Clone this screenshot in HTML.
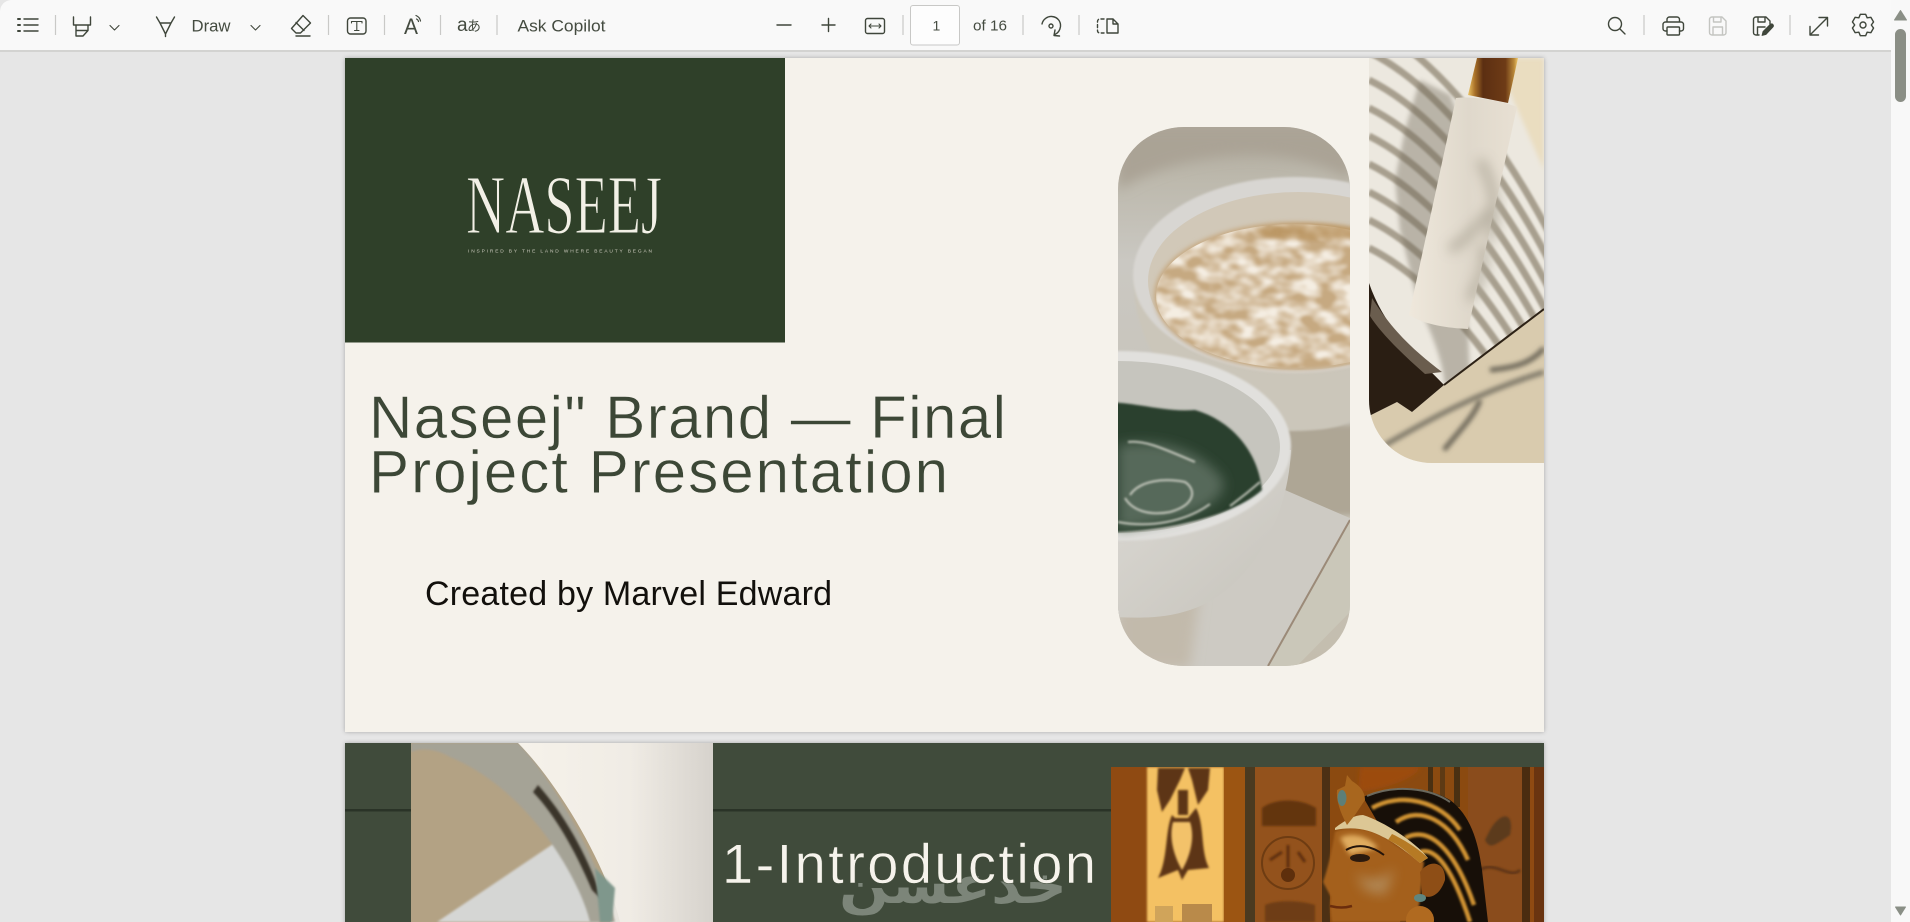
<!DOCTYPE html>
<html lang="en"><head><meta charset="utf-8"><title>Naseej PDF</title>
<style>html,body{margin:0;padding:0;width:1910px;height:922px;overflow:hidden;background:#e6e6e6}svg{display:block}text{font-family:"Liberation Sans","DejaVu Sans","Noto Sans CJK JP",sans-serif}</style></head><body>
<svg width="1910" height="922" viewBox="0 0 1910 922" xmlns="http://www.w3.org/2000/svg">
<defs>
<filter id="b1" x="-20%" y="-20%" width="140%" height="140%"><feGaussianBlur stdDeviation="1"/></filter>
<filter id="b2" x="-20%" y="-20%" width="140%" height="140%"><feGaussianBlur stdDeviation="2.5"/></filter>
<filter id="b3" x="-30%" y="-30%" width="160%" height="160%"><feGaussianBlur stdDeviation="6"/></filter>
<filter id="sh" x="-2%" y="-2%" width="104%" height="104%"><feDropShadow dx="0" dy="0" stdDeviation="2" flood-color="#000" flood-opacity=".28"/></filter>
<filter id="oats" x="0" y="0" width="100%" height="100%"><feTurbulence type="fractalNoise" baseFrequency=".05 .075" numOctaves="2" seed="7"/><feColorMatrix values="0 0 0 0 .91 0 0 0 0 .85 0 0 0 0 .76 2.600 0 0 0 -.85"/><feGaussianBlur stdDeviation="1"/><feComposite in2="SourceAlpha" operator="in"/></filter>
<linearGradient id="bg1" x1="0" y1="0" x2="0" y2="1"><stop offset="0" stop-color="#aea89b"/><stop offset=".1" stop-color="#bdb9ad"/><stop offset=".25" stop-color="#cac8c2"/><stop offset="1" stop-color="#c4bdae"/></linearGradient>
<linearGradient id="front" x1="0" y1="0" x2="1" y2="1"><stop offset="0" stop-color="#dddbd6"/><stop offset="1" stop-color="#c6c3bb"/></linearGradient>
<linearGradient id="tube" x1="0" y1="0" x2="1" y2="0"><stop offset="0" stop-color="#efe8dc"/><stop offset=".55" stop-color="#dfd8cb"/><stop offset="1" stop-color="#e8e0d3"/></linearGradient>
<linearGradient id="cap" x1="0" y1="0" x2="1" y2="0"><stop offset="0" stop-color="#edc565"/><stop offset=".14" stop-color="#a87028"/><stop offset=".3" stop-color="#5c2f12"/><stop offset=".75" stop-color="#6e3b16"/><stop offset=".92" stop-color="#b98838"/><stop offset="1" stop-color="#f0ca6c"/></linearGradient>
<linearGradient id="right2" x1="0" y1="0" x2="1" y2="0"><stop offset="0" stop-color="#f6f2ea"/><stop offset=".55" stop-color="#f0ece5"/><stop offset="1" stop-color="#d4d0ca"/></linearGradient>
<clipPath id="c1"><rect x="1118" y="127" width="232" height="539" rx="66" ry="62"/></clipPath>
<clipPath id="c2"><path d="M1369 58H1544V463H1432C1397 463 1369 435 1369 400Z"/></clipPath>
<clipPath id="c3"><rect x="411" y="743" width="302" height="179"/></clipPath>
<clipPath id="c4"><rect x="1111" y="767" width="433" height="155"/></clipPath>
</defs>

<rect width="1910" height="922" fill="#e6e6e6"/>

<!-- PAGE 1 -->
<g filter="url(#sh)"><rect x="345" y="58" width="1199" height="674" fill="#f5f2eb"/></g>
<rect x="345" y="58" width="440" height="284.500" fill="#2f4029"/>
<text transform="translate(466,233)" font-size="84" textLength="196" lengthAdjust="spacingAndGlyphs" fill="#f2f0e6" stroke="#2f4029" stroke-width="1.100" style="font-family:'Liberation Serif',serif">NASEEJ</text>
<text x="468" y="252.500" font-size="4.800" textLength="184" lengthAdjust="spacing" fill="#cfcdc0">INSPIRED BY THE LAND WHERE BEAUTY BEGAN</text>
<text x="369" y="438" font-size="60" textLength="637" lengthAdjust="spacing" fill="#3c4736" stroke="#f5f2eb" stroke-width=".5">Naseej" Brand — Final</text>
<text x="369" y="492.500" font-size="60" textLength="579" lengthAdjust="spacing" fill="#3c4736" stroke="#f5f2eb" stroke-width=".5">Project Presentation</text>
<text x="425" y="605" font-size="34" textLength="407" lengthAdjust="spacing" fill="#12100c">Created by Marvel Edward</text>

<!-- bowls image -->
<g clip-path="url(#c1)">
<rect x="1118" y="127" width="232" height="539" fill="url(#bg1)"/>
<path d="M1118 190C1180 150 1290 140 1350 180V127H1118Z" fill="#aaa395" filter="url(#b3)"/>
<rect x="1270" y="425" width="90" height="90" fill="#aea695" filter="url(#b2)"/>
<path d="M1134 290C1140 380 1220 431 1290 431C1320 431 1340 428 1352 420V270H1134Z" fill="#cbc6ba" filter="url(#b1)"/>
<ellipse cx="1295" cy="275" rx="162" ry="98" fill="#d8d6d2" filter="url(#b1)"/>
<ellipse cx="1298" cy="281" rx="150" ry="89" fill="#d1c8b8"/>
<ellipse cx="1295" cy="296" rx="141" ry="74" fill="#c6a981" filter="url(#b2)"/>
<ellipse cx="1295" cy="296" rx="139" ry="72" fill="#c6a981" filter="url(#oats)"/>
<ellipse cx="1310" cy="232" rx="55" ry="8" fill="#b58c52" filter="url(#b2)" opacity=".6"/>
<path d="M1118 600L1285 490L1352 519V560L1270 668H1118Z" fill="#cdcac3"/>
<path d="M1118 610L1200 590L1190 668H1118Z" fill="#c2baab" filter="url(#b3)"/>
<path d="M1352 518L1268 668H1295L1352 610Z" fill="#cac7b9"/>
<path d="M1350 520L1268 666" stroke="#9b8a78" stroke-width="2" fill="none"/>
<path d="M1100 450H1291C1288 520 1250 590 1190 610C1160 620 1130 618 1100 616Z" fill="url(#front)"/>
<ellipse cx="1120" cy="446" rx="171" ry="95" fill="#e1e0dd" filter="url(#b1)"/>
<ellipse cx="1118" cy="447" rx="162" ry="86" fill="#c6c5be"/>
<path d="M1110 402C1150 405 1165 412 1195 410C1230 420 1258 450 1262 490C1240 510 1190 528 1118 532H1100V402Z" fill="#2b402f" filter="url(#b1)"/>
<path d="M1118 445C1160 437 1200 450 1222 478C1230 495 1205 512 1170 520C1150 525 1130 528 1118 530Z" fill="#56695a" filter="url(#b3)"/>
<path d="M1128 442C1145 440 1162 448 1195 462M1130 495C1140 480 1165 478 1185 482C1197 490 1195 505 1170 512C1148 516 1132 510 1125 498M1118 522C1150 528 1185 522 1210 504M1260 482C1245 495 1238 500 1230 506" stroke="#dcdcd2" stroke-width="2" fill="none" filter="url(#b1)" opacity=".85"/>
</g>

<!-- tube image -->
<g clip-path="url(#c2)">
<rect x="1369" y="58" width="175" height="405" fill="#ece8df"/>
<path d="M1495 58H1544V170Z" fill="#eaddc0" filter="url(#b2)"/>
<g fill="none" stroke="#a79f8e" stroke-width="7" filter="url(#b1)">
<path d="M1369 24C1420 49 1490 114 1560 254"/><path d="M1369 52C1420 77 1490 142 1560 282"/><path d="M1369 80C1420 105 1490 170 1560 310"/><path d="M1369 108C1420 133 1490 198 1560 338"/><path d="M1369 136C1420 161 1490 226 1560 366"/><path d="M1369 164C1420 189 1490 254 1560 394"/><path d="M1369 192C1420 217 1490 282 1560 422"/><path d="M1369 220C1420 245 1490 310 1560 450"/><path d="M1369 248C1420 273 1490 338 1560 478"/>
</g>
<path d="M1420 80L1450 95L1460 120L1465 170L1465 260L1470 380L1445 385C1440 340 1420 320 1410 270L1400 230L1395 180L1405 130Z" fill="#6e6656" opacity=".4" filter="url(#b2)"/>
<path d="M1544 310L1444 385L1412 412L1397 402L1369 416V470H1544Z" fill="#d9cbae"/>
<path d="M1385 445C1420 425 1470 395 1544 372" stroke="#7d7768" stroke-width="5" fill="none" filter="url(#b2)"/>
<path d="M1444 450C1460 430 1475 415 1480 400M1490 370C1510 368 1530 365 1544 348" stroke="#6c6658" stroke-width="5" fill="none" filter="url(#b2)"/>
<path d="M1369 283C1385 330 1420 360 1444 385L1412 412L1397 402L1369 416Z" fill="#2a1e13"/>
<path d="M1372 298C1395 335 1420 355 1442 372L1425 374C1400 352 1380 332 1370 316Z" fill="#6a5d4e"/>
<path d="M1544 309L1444 385" stroke="#2d2216" stroke-width="2"/>
<path d="M1468 95L1477 58H1518L1508 103Z" fill="url(#cap)"/>
<path d="M1456 98C1470 96 1500 100 1517 107L1468 329C1448 328 1425 325 1409 315Z" fill="url(#tube)"/>
<path d="M1480 160C1490 180 1500 200 1490 240M1450 250C1465 240 1480 225 1490 210M1470 300C1480 280 1488 265 1482 245" stroke="#aca596" stroke-width="9" fill="none" filter="url(#b3)" opacity=".8"/>
</g>

<!-- PAGE 2 -->
<g filter="url(#sh)"><rect x="345" y="743" width="1199" height="200" fill="#414c3a"/></g>
<rect x="345" y="809" width="66" height="2.500" fill="#2a3327"/>
<rect x="713" y="809" width="400" height="2.500" fill="#2a3327"/>
<g clip-path="url(#c3)">
<rect x="411" y="743" width="302" height="179" fill="url(#right2)"/>
<path d="M411 743H610V922H411Z" fill="#b3a284"/>
<path d="M437 922L559 840L600 922Z" fill="#d5d6d4" filter="url(#b1)"/>
<path d="M411 743H518C550 775 600 860 615 922H590C580 880 530 790 450 757C435 748 420 748 411 752Z" fill="#a5a396" filter="url(#b1)"/>
<path d="M518 743C555 780 605 860 620 922H720V743Z" fill="url(#right2)"/>
<path d="M538 785C565 815 590 860 602 900L592 890C575 850 555 815 533 792Z" fill="#3a342a" filter="url(#b1)"/>
<path d="M595 868L615 888L612 922H600Z" fill="#7f978c" filter="url(#b1)"/>
</g>
<text x="1067" y="903" font-size="52" font-weight="bold" textLength="228" lengthAdjust="spacingAndGlyphs" fill="#7c8579" style="font-family:'DejaVu Sans',sans-serif" direction="rtl">خدعسن</text>
<text x="722" y="883" font-size="56" textLength="374" lengthAdjust="spacing" fill="#f6f3ec" stroke="#414c3a" stroke-width=".5">1-Introduction</text>

<!-- Egyptian image -->
<g clip-path="url(#c4)">
<rect x="1111" y="767" width="433" height="155" fill="#8f4a12"/>
<rect x="1147" y="767" width="77" height="155" fill="#f4c164" filter="url(#b1)"/>
<g fill="#5d3413" filter="url(#b1)">
<path d="M1158 768L1185 768L1180 780L1170 800L1162 812L1157 790Z"/><path d="M1188 768L1210 768L1208 790L1198 805L1192 780Z"/><rect x="1178" y="790" width="10" height="25"/>
<path d="M1172 815C1165 830 1168 860 1158 878L1178 870L1182 880L1188 870L1209 868C1200 850 1205 825 1196 808L1188 818H1175Z"/>
</g>
<path d="M1173 822H1190C1196 840 1188 860 1182 870C1176 860 1168 840 1173 822Z" fill="#f3c26a" filter="url(#b1)"/>
<rect x="1155" y="906" width="18" height="16" fill="#d0a45a"/><rect x="1182" y="904" width="30" height="18" fill="#b98a4a"/>
<rect x="1224" y="767" width="21" height="155" fill="#9c5512"/>
<rect x="1245" y="767" width="10" height="155" fill="#4a3a20"/>
<rect x="1255" y="767" width="67" height="155" fill="#93521c"/>
<path d="M1262 808C1275 798 1300 798 1316 808V826H1262Z" fill="#64350f" filter="url(#b1)"/>
<circle cx="1288" cy="863" r="26" fill="none" stroke="#6e3c12" stroke-width="2"/>
<circle cx="1288" cy="875" r="7" fill="#5e2f0c"/><path d="M1288 845V868M1270 860L1282 852M1298 852L1305 862" stroke="#5e2f0c" stroke-width="3" filter="url(#b1)"/>
<path d="M1265 905C1275 900 1300 900 1315 905V922H1265Z" fill="#6e3c12" filter="url(#b1)"/>
<rect x="1322" y="767" width="8" height="155" fill="#4c3014"/>
<rect x="1330" y="767" width="138" height="155" fill="#8b4a10"/>
<path d="M1360 767H1420C1415 780 1380 790 1358 792Z" fill="#9c4c0e" filter="url(#b2)"/>
<rect x="1428" y="767" width="5" height="30" fill="#4a3012"/><rect x="1440" y="767" width="5" height="30" fill="#5e3a14"/><rect x="1454" y="767" width="6" height="40" fill="#4a3012"/>
<rect x="1468" y="767" width="54" height="155" fill="#8a4c1c"/>
<path d="M1490 830C1500 812 1515 810 1510 835C1495 845 1490 850 1485 840Z" fill="#5c3a1e" filter="url(#b1)"/>
<path d="M1480 870C1495 860 1510 880 1520 870" stroke="#5e3614" stroke-width="3" fill="none" filter="url(#b1)"/>
<rect x="1522" y="767" width="8" height="155" fill="#4a2c10"/><rect x="1534" y="767" width="10" height="155" fill="#6a3410"/>
<path d="M1363 797C1395 782 1430 788 1450 800C1470 815 1478 840 1482 870L1488 922H1400L1420 860L1385 835Z" fill="#170f08"/>
<g fill="none" stroke="#cf9230" stroke-width="4.500" filter="url(#b1)">
<path d="M1372 808C1400 792 1440 800 1460 830"/>
<path d="M1396 822C1420 805 1450 820 1468 860"/>
<path d="M1405 838C1430 825 1455 850 1474 905"/>
<path d="M1420 852C1440 845 1458 885 1470 922"/>
</g>
<path d="M1367 796C1395 784 1430 788 1450 802" stroke="#8d8f82" stroke-width="2" fill="none" opacity=".7"/>
<path d="M1335 832C1345 826 1375 826 1395 845L1424 862L1420 900L1416 922H1332C1330 910 1330 905 1331 897L1323 882C1328 868 1332 850 1335 832Z" fill="#a4601c" filter="url(#b1)"/>
<path d="M1340 838C1350 832 1368 835 1378 848L1350 855Z" fill="#e0ac5e" filter="url(#b2)"/>
<path d="M1355 872C1370 885 1385 878 1395 868L1385 895L1365 890Z" fill="#b69468" filter="url(#b3)" opacity=".8"/>
<path d="M1346 850C1358 843 1372 846 1384 855" stroke="#24140a" stroke-width="2" fill="none"/>
<ellipse cx="1360" cy="858" rx="10" ry="4" fill="#2c1a0e"/>
<path d="M1330 906C1338 908 1345 908 1352 906" stroke="#6b2d0c" stroke-width="2.500" fill="none"/>
<path d="M1420 872C1430 858 1446 862 1445 880C1440 895 1430 900 1422 895Z" fill="#8e4e16"/>
<ellipse cx="1420" cy="898" rx="6" ry="4" fill="#5f8680"/>
<circle cx="1420" cy="920" r="14" fill="#b06a20"/>
<path d="M1335 828C1345 820 1355 815 1363 815C1385 822 1415 842 1428 858L1420 863C1405 850 1390 840 1383 837C1370 830 1355 826 1335 830Z" fill="#dcc795"/>
<path d="M1392 834C1405 840 1420 850 1428 858L1420 863C1410 855 1400 845 1388 840Z" fill="#b67a24"/>
<path d="M1345 786L1347 775L1352 781C1358 785 1365 790 1365 800L1355 815L1347 825C1340 812 1336 800 1337 790Z" fill="#a8661e"/>
<ellipse cx="1342" cy="798" rx="4.500" ry="8" fill="#5d7f78"/>
</g>

<!-- TOOLBAR -->
<path d="M0 51V12C0 5 5 0 12 0H1891V51Z" fill="#f9f9f9"/>
<rect x="0" y="50" width="1891" height="2" fill="#d3d3d1"/>
<g stroke="#c9c9c7" stroke-width="1.200"><path d="M55.500 15V35M328.500 15V35M384.500 15V35M440.500 15V35M497 15V35M903 15V35M1023 15V35M1079 15V35M1644 15V35M1790 15V35"/></g>

<g fill="none" stroke="#3f463b" stroke-width="1.400" stroke-linejoin="round" stroke-linecap="round">
<path d="M24 19H38M24 25H38M24 31H38"/>
<path d="M18 19H20M18 25H20M18 31H20" stroke-width="2"/>
<path d="M73.500 17V25H90.500V17M76 25V36H83L88 30.500V25M76 30.500H88"/>
<path d="M110 25.500L114.500 30L119 25.500M251 25.500L255.500 30L260 25.500" stroke-width="1.100"/>
<path d="M156.500 17L160 23H171L174.500 17M160 23L165.500 34L171 23M165.500 34V36.500"/>
<path d="M303 15.500L310.500 23L300.500 33H296L291.500 28.500ZM296 22.500L304 30.500M296 36H310"/>
<rect x="347.500" y="18" width="18.500" height="16" rx="3"/>
<path d="M351.500 21.500V23M351.500 21.500H362V23M356.800 21.500V30.500M354.500 30.500H359" stroke-width="1.100"/>
<path d="M416 15.500C418.500 16.500 420 18.500 420.500 21M416.500 19C417.700 19.500 418.300 20.500 418.500 21.500" stroke-width="1.200"/>
<path d="M777 25H791M822 25H835M828.500 18.500V31.500"/>
<rect x="865.500" y="18.500" width="19" height="15" rx="2"/>
<path d="M869 26H881M871 24L869 26L871 28M879 24L881 26L879 28" stroke-width="1.100"/>
<path d="M1042 24C1043 19 1048 16 1052 16.500C1058 17 1061 22 1060.500 26.500C1060 30 1058 33 1055 34.500M1055 30L1054 35.500L1059.500 36"/>
<circle cx="1051" cy="26" r="2"/>
<path d="M1104 19H1100C1098.500 19 1097.500 20 1097.500 21.500V30.500C1097.500 32 1098.500 33 1100 33H1104" stroke-dasharray="3 2.500"/>
<path d="M1107 19H1113L1118 24V33H1107ZM1113 19V24H1118"/>
<circle cx="1615" cy="24" r="6.500"/><path d="M1620 29L1625 34"/>
<path d="M1667 22V19.500C1667 18 1668 17 1669.500 17H1677C1678.500 17 1679.500 18 1679.500 19.500V22M1667 31H1665.500C1664 31 1663 30 1663 28.500V24.500C1663 23 1664 22 1665.500 22H1681C1682.500 22 1683.500 23 1683.500 24.500V28.500C1683.500 30 1682.500 31 1681 31H1679.500"/>
<rect x="1667" y="27" width="12.500" height="8" rx="1"/>
<g stroke="#c4c5c1"><path d="M1709.500 19.500C1709.500 18 1710.500 17 1712 17H1722L1726 21V32.500C1726 34 1725 35 1723.500 35H1712C1710.500 35 1709.500 34 1709.500 32.500ZM1713.500 17V22H1721V17M1713 35V27H1722.500V35"/></g>
<path d="M1753.500 19.500C1753.500 18 1754.500 17 1756 17H1766L1770 21V24M1758 17V22H1765V17M1753.500 19.500V32.500C1753.500 34 1754.500 35 1756 35H1759M1757.500 35V27H1765"/>
<path d="M1762 35.500L1763 31.500L1770 24.500C1771 23.500 1772.500 23.500 1773 24.500C1773.800 25.500 1773.500 26.500 1772.800 27.200L1766 34.500Z" fill="#3f463b" stroke-width=".8"/>
<path d="M1810 35L1827 18M1819 17.500H1827.500V26M1810 26.500V35H1818.500"/>
<g transform="translate(1863,25)"><path d="M2.660 -10.670L4.150 -7.190L7.910 -7.640L10.570 -3.030L8.300 0L10.570 3.030L7.910 7.640L4.150 7.190L2.660 10.670H-2.660L-4.150 7.190L-7.910 7.640L-10.570 3.030L-8.300 0L-10.570 -3.030L-7.910 -7.640L-4.150 -7.190L-2.660 -10.670Z"/><circle r="3"/></g>
</g>

<g fill="#444b40">
<text x="191.500" y="31.500" font-size="17" textLength="39" lengthAdjust="spacingAndGlyphs">Draw</text>
<text x="404" y="34" font-size="22" textLength="14" lengthAdjust="spacingAndGlyphs">A</text>
<text x="457" y="31" font-size="19">a</text>
<text x="467" y="31" font-size="14" style="font-family:'Noto Sans CJK JP',sans-serif">あ</text>
<text x="517.500" y="31.500" font-size="17" textLength="88" lengthAdjust="spacingAndGlyphs">Ask Copilot</text>
<text x="973" y="30.500" font-size="15" textLength="34" lengthAdjust="spacingAndGlyphs">of 16</text>
</g>
<rect x="910.500" y="5.500" width="49" height="39.500" rx="2.500" fill="#fdfdfd" stroke="#c8c8c6"/>
<text x="932.500" y="30.500" font-size="14" fill="#444b40">1</text>

<!-- SCROLLBAR -->
<path d="M1891 0H1910V922H1891Z" fill="#f8f8f8"/>
<path d="M1894.500 20L1900.500 10.500L1906.500 20Z" fill="#8a8f86" stroke="#8a8f86" stroke-linejoin="round"/>
<rect x="1895" y="29" width="11" height="73" rx="5.500" fill="#8a8e85"/>
<path d="M1895.500 907L1900.500 915L1905.500 907Z" fill="#8a8f86" stroke="#8a8f86" stroke-linejoin="round"/>
</svg>
</body></html>
